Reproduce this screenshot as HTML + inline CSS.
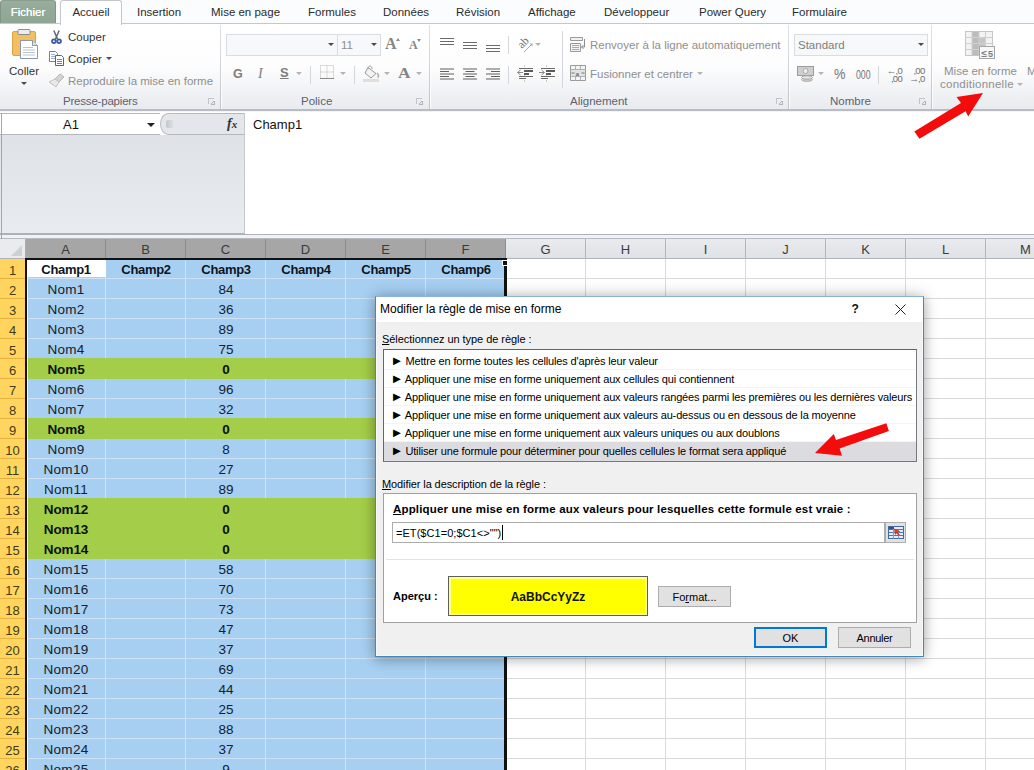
<!DOCTYPE html>
<html lang="fr"><head><meta charset="utf-8"><title>Excel</title>
<style>
*{box-sizing:border-box;margin:0;padding:0}
html,body{width:1034px;height:770px;overflow:hidden;background:#fff}
body{position:relative;font-family:"Liberation Sans",sans-serif;font-size:12px;color:#1e1e1e}
.abs{position:absolute}
/* ---------- tabs ---------- */
.tabs{position:absolute;left:0;top:0;width:1034px;height:24px;background:#fbfcfd;border-bottom:1px solid #c4c8cd}
.tabs span{position:absolute;top:0;height:24px;line-height:24px;font-size:11.5px;color:#2b2b2b;white-space:nowrap}
.tabs .fich{left:0;width:56px;height:23px;line-height:23px;background:linear-gradient(#98ad9c,#8fa694);color:#fff;text-shadow:0 0 .6px #fff;text-align:center;border-radius:3px 3px 0 0;border:1px solid #7f9686;border-top-color:#8ba091;border-bottom:none}
.tabs .acc{left:60px;width:62px;height:25px;line-height:22px;background:#fff;border:1px solid #c4c8cd;border-bottom:none;border-radius:3px 3px 0 0;text-align:center;z-index:2}
/* ---------- ribbon ---------- */
.ribbon{position:absolute;left:0;top:24px;width:1034px;height:87px;background:linear-gradient(#ffffff 0%,#fdfdfe 50%,#f2f4f6 75%,#e8ebef 100%);border-bottom:2px solid #b9bdc3}
.ribbon .sep{position:absolute;top:1px;width:1px;height:84px;background:linear-gradient(#dfe2e6,#bfc3c9);box-shadow:1px 0 0 rgba(255,255,255,.8)}
.ribbon .t{position:absolute;white-space:nowrap;font-size:11.5px;color:#333;line-height:14px}
.ribbon .g{color:#8f8f8f}
.ribbon .lbl{position:absolute;top:70px;font-size:11.5px;color:#5a6270;line-height:14px;white-space:nowrap}
.ribbon .box{position:absolute;top:10px;height:22px;border:1px solid #d9dce1;background:#f7f8fa}
.under{position:absolute;left:0;top:111px;width:1034px;height:3px;background:#f3f4f6}
/* ---------- formula bar ---------- */
.fbar{position:absolute;left:0;top:112px;width:1034px;height:127px;background:#fff}
.namebox{position:absolute;left:0;top:1px;width:161px;height:22px;background:#fff;border:1px solid #b4b8be;border-left:none;border-right:none}
.namebox span{position:absolute;left:63px;top:3px;font-size:13px;color:#111;line-height:15px}
.fgrey{position:absolute;left:0;top:23px;width:245px;height:99px;background:linear-gradient(#dfe3e8,#e8ebef);border-bottom:1px solid #aeb2b8;border-right:1px solid #c5c9ce}
.fmid{position:absolute;left:160px;top:1px;width:85px;height:22px;background:#e3e6ea;border-top:1px solid #b4b8be;border-bottom:1px solid #b4b8be;border-right:1px solid #c5c9ce}
.ftext{position:absolute;left:253px;top:5px;font-size:13px;color:#111;line-height:15px}
.fbot{position:absolute;left:0;top:122px;width:1034px;height:5px;background:#f1f2f4;border-top:1px solid #aeb2b8}
/* ---------- headers ---------- */
.colhdr{position:absolute;left:0;top:238px;width:1034px;height:21px;background:#e4e7eb;border-top:1px solid #b7bbc1;border-bottom:1px solid #b1b5ba}
.corner{position:absolute;left:0;top:0;width:26px;height:19px;background:#e9ebee;border-right:1px solid #a9adb3}
.corner i{position:absolute;right:3px;bottom:2px;border-left:11px solid transparent;border-bottom:11px solid #cdd0d4;width:0;height:0}
.ch{position:absolute;top:0;width:80px;height:19px;line-height:21px;text-align:center;font-size:13px;color:#3c3c3c;border-right:1px solid #b1b5ba;background:linear-gradient(#e9ebee,#dfe2e6)}
.ch.sel{background:#a6a6a6;color:#3a3a3a;border-right-color:#8c8c8c}
/* ---------- grid ---------- */
.grid{position:absolute;left:0;top:259px;width:1034px;height:520px;
 background-image:linear-gradient(to right,#d8dadd 1px,transparent 1px),linear-gradient(#d8dadd 1px,transparent 1px);
 background-size:80px 20px,80px 20px;background-position:25px 0,0 -1px;background-color:#fff}
.row{position:absolute;left:0;width:506px;height:20px;background:#a6cff1;
 background-image:linear-gradient(to right,#cde2f6 1px,transparent 1px);background-size:80px 20px;background-position:25px 0;border-bottom:1px solid #cde2f6}
.row.gr{background:#a4ce49;border-bottom-color:#a4ce49;background-image:none}
.row.gr:before{content:'';position:absolute;left:27px;right:0;top:-1px;height:1px;background:#a4ce49}
.row span{position:absolute;bottom:1px;width:80px;height:19px;line-height:23.5px;text-align:center;font-size:13.5px;color:#14202e;white-space:nowrap;letter-spacing:0}
.row span:nth-of-type(1){letter-spacing:.3px}
.row.hd span,.row.gr span{font-weight:bold;color:#0c1622;font-size:13px;letter-spacing:-0.33px}
.row.gr span{font-size:13.5px;letter-spacing:-.1px;color:#0a1208}
.row .act{background:#fff}
.rn{position:absolute;left:0;bottom:-1px;width:26px;height:20px;line-height:24px;text-align:center;font-size:13px;font-weight:normal;color:#453a18;background:#ffd55f;border-bottom:1px solid #e6b23e;border-right:1px solid #d9a633}
.selr{position:absolute;left:504px;top:6px;width:3px;height:520px;background:#111}
.selb{position:absolute;left:25px;top:-1px;width:482px;height:2px;background:#111}
.sell{position:absolute;left:25.400px;top:-1px;width:1.600px;height:520px;background:#15110a;border-right:0}
.sell:after{content:'';position:absolute;left:1.600px;top:3px;width:1px;height:520px;background:rgba(255,255,255,.8)}
.selh{position:absolute;left:502px;top:1px;width:6px;height:6px;background:#111;border:1px solid #fff}
/* small icons */
i.dd{position:absolute;width:0;height:0;border-left:3px solid transparent;border-right:3px solid transparent;border-top:3px solid #4a4a4a}
i.dd.l{border-top-color:#b3b3b3;border-left-width:3px;border-right-width:3px;border-top-width:3px}
i.dd.s{border-top-color:#8a8a8a;border-left-width:2.500px;border-right-width:2.500px;border-top-width:3px}
i.dd.k{border-top-color:#222;border-left-width:4px;border-right-width:4px;border-top-width:4px}
i.up{position:absolute;width:0;height:0;border-left:2.500px solid transparent;border-right:2.500px solid transparent;border-bottom:3px solid #8a8a8a}
i.ln{position:absolute;top:74px;width:6px;height:6px;border-left:1px solid #c0c4ca;border-top:1px solid #c0c4ca}
i.ln:after{content:"";position:absolute;left:2px;top:2px;width:3px;height:3px;border-right:1px solid #b0b4ba;border-bottom:1px solid #b0b4ba;background:linear-gradient(135deg,transparent 45%,#b0b4ba 45%,#b0b4ba 60%,transparent 60%)}
.vs{position:absolute;width:1px;height:18px;background:#d3d6da}
.dec{width:16px;height:20px;color:#6f6f6f;text-align:right}
.dec b{display:block;font:normal 9.500px/7.500px "Liberation Sans",sans-serif;letter-spacing:-0.700px;white-space:nowrap}
.knob{position:absolute;left:0;top:-1px;width:9px;height:22px;border:1px solid #b9bdc3;border-right:none;border-radius:8px 0 0 8px / 11px 0 0 11px;background:#e3e6ea}
.knob:after{content:"";position:absolute;left:5px;top:6px;width:7px;height:8px;border-radius:2px 0 0 2px;background:linear-gradient(to right,#c3c6ca,#dde0e3)}
.fmid:before{content:"";position:absolute;left:0;top:-1px;width:9px;height:22px;background:#fff}
.fx{position:absolute;left:67px;top:0;font:italic bold 14px/20px "Liberation Serif",serif;color:#333}
.fx small{font-size:11px}
/* ---------- dialog ---------- */
.dlg{position:absolute;left:375px;top:296px;width:549px;height:361px;background:#f0f0f0;border:1px solid #4687b8;border-top-color:#8db3d3;box-shadow:0 0 14px rgba(0,0,0,.28),0 4px 10px rgba(0,0,0,.12),inset 0 0 0 1px rgba(255,255,255,.6);z-index:20;font-size:11px;color:#000}
.ttl{position:absolute;left:0;top:0;width:547px;height:25px;background:#fff}
.ttl span{position:absolute;left:4px;top:5px;font-size:12px;line-height:15px;color:#000;white-space:nowrap}
.ttl .q{position:absolute;left:475.500px;top:5px;font:bold 12px/15px "Liberation Sans",sans-serif;color:#111}
.ttl .x{position:absolute;left:519px;top:7px}
.dl{position:absolute;font-size:11px;line-height:14px;white-space:nowrap;color:#000}
.lb{position:absolute;left:7px;top:52px;width:534px;height:113px;padding-top:2px;background:#fff;border:1px solid #767a80;border-top-color:#5f6368;border-left-color:#63676c}
.lb p{height:18.050px;line-height:18px;padding-left:8px;white-space:nowrap;font-size:11px;letter-spacing:-0.15px;border-bottom:1px solid #f4f4f4;color:#000;word-spacing:0}
.lb p.on{background:#dcdce0;border-bottom:none;height:19px}
.pn{position:absolute;left:7px;top:196px;width:534px;height:130px;background:#fff;border:1px solid #a0a0a0}
.bt{position:absolute;font-weight:bold;font-size:11px;line-height:14px;white-space:nowrap}
.inp{position:absolute;left:8px;top:28px;width:493px;height:21px;border:1px solid #adadad;background:#fff}
.inp span{position:absolute;left:3px;top:3px;font-size:11px;line-height:14px;letter-spacing:.05px}
.car{position:absolute;left:109px;top:2px;width:1px;height:15px;background:#000}
.ref{position:absolute;left:500.5px;top:28px;width:21px;height:21px;border:1px solid #adadad;background:#e1e1e1}
.ref svg{position:absolute;left:2px;top:3px}
.hr{position:absolute;left:2px;top:65px;width:528px;height:1px;background:#e3e3e3}
.pv{position:absolute;left:64px;top:82px;width:200px;height:40px;background:#ffff00;border:1px solid #5e5e5e;box-shadow:inset 0 0 0 2px #ffff8c;text-align:center;font:bold 12px/40px "Liberation Sans",sans-serif;color:#111}
.btn{position:absolute;height:21px;border:1px solid #adadad;background:#e1e1e1;text-align:center;font-size:11px;line-height:20.5px;color:#000}
.btn.ok{border:2px solid #0078d7;line-height:18.5px}
.bt.w{font-size:11.5px;letter-spacing:.16px}
.ledge{position:absolute;left:1px;top:113px;width:1px;height:126px;background:#a4a8ae;z-index:3}
.lb p i{font-style:normal;font-size:13px;line-height:10px;margin-left:-1.5px;letter-spacing:0;display:inline-block;width:12px;vertical-align:0}
</style></head><body>
<div class="tabs">
<span class="fich">Fichier</span>
<span class="acc">Accueil</span>
<span style="left:137px">Insertion</span>
<span style="left:211px">Mise en page</span>
<span style="left:308px">Formules</span>
<span style="left:383px">Données</span>
<span style="left:456px">Révision</span>
<span style="left:528px">Affichage</span>
<span style="left:604px">Développeur</span>
<span style="left:699px">Power Query</span>
<span style="left:792px">Formulaire</span>
</div>
<div class="ribbon">
<!-- Presse-papiers -->
<svg class="abs" style="left:10px;top:4px" width="30" height="32" viewBox="0 0 30 32">
 <rect x="2.5" y="3.5" width="23" height="24" rx="1.5" fill="#f2c063" stroke="#d9a544"/>
 <rect x="8" y="1.5" width="12" height="5" rx="1" fill="#ededed" stroke="#8c8c8c"/>
 <path d="M10.5 12.5h12l5 5v13h-17z" fill="#fff" stroke="#8b98ab"/>
 <path d="M22.5 12.5v5h5" fill="#dfe5ee" stroke="#8b98ab"/>
 <path d="M13 19.5h10M13 22h12M13 24.5h12M13 27h12" stroke="#b9c2cf" stroke-width="1"/>
</svg>
<span class="t" style="left:9px;top:40px">Coller</span>
<i class="dd" style="left:21px;top:58px"></i>
<svg class="abs" style="left:51px;top:6px" width="11" height="15" viewBox="0 0 11 15">
 <path d="M2.800 0.500l3.700 8.500M8.200 0.500L4.500 9" stroke="#5f6873" stroke-width="1.500" fill="none"/>
 <circle cx="2.900" cy="11.300" r="1.900" fill="#dfe6f5" stroke="#3a5ca8" stroke-width="1.700"/>
 <circle cx="8.100" cy="11.300" r="1.900" fill="#dfe6f5" stroke="#3a5ca8" stroke-width="1.700"/>
</svg>
<span class="t" style="left:68px;top:6px">Couper</span>
<svg class="abs" style="left:48px;top:27px" width="17" height="15" viewBox="0 0 17 15">
 <path d="M1.500 0.500h6l2 2v8h-8z" fill="#fff" stroke="#6e85a8"/>
 <path d="M3 3.500h4M3 5.500h5M3 7.500h5" stroke="#9fb3d1"/>
 <path d="M7.500 4.500h6l2 2v8h-8z" fill="#fff" stroke="#3f66a6"/>
 <path d="M9 8.500h5M9 10.500h5M9 12.500h5" stroke="#5f86c6"/>
</svg>
<span class="t" style="left:68px;top:28px">Copier</span>
<i class="dd" style="left:106px;top:33px"></i>
<svg class="abs" style="left:48px;top:49px" width="18" height="15" viewBox="0 0 18 15">
 <path d="M12 1l4 3-5 5-4-3z" fill="#d4d4d4" stroke="#b5b5b5"/>
 <path d="M7 6l4 3-3 5-7-5z" fill="#e8e8e8" stroke="#c2c2c2"/>
</svg>
<span class="t g" style="left:68px;top:50px">Reproduire la mise en forme</span>
<span class="lbl" style="left:63px;letter-spacing:-.2px">Presse-papiers</span>
<i class="ln" style="left:208px"></i>
<div class="sep" style="left:220px"></div>
<!-- Police -->
<div class="box" style="left:226px;width:112px"></div>
<div class="box" style="left:337px;width:44px"></div>
<i class="dd" style="left:328px;top:19px"></i>
<span class="t g" style="left:341px;top:14px">11</span>
<i class="dd" style="left:371px;top:19px"></i>
<span class="abs" style="left:385px;top:8px;font:bold 16px/24px 'Liberation Serif',serif;color:#858585">A</span><i class="up" style="left:396px;top:14px"></i>
<span class="abs" style="left:409px;top:11px;font:bold 12px/20px 'Liberation Serif',serif;color:#858585">A</span><i class="dd s" style="left:417px;top:15px"></i>
<span class="abs" style="left:233px;top:42px;font:bold 12.5px/16px 'Liberation Sans',sans-serif;color:#7d7d7d">G</span>
<span class="abs" style="left:258px;top:42px;font:italic 14px/16px 'Liberation Serif',serif;color:#7d7d7d">I</span>
<span class="abs" style="left:280px;top:41px;font:bold 13px/16px 'Liberation Sans',sans-serif;color:#7d7d7d;text-decoration:underline">S</span>
<i class="dd l" style="left:296px;top:48px"></i>
<div class="vs" style="left:310px;top:42px"></div>
<svg class="abs" style="left:320px;top:41px" width="15" height="15" viewBox="0 0 15 15"><path d="M0.500 0.500h13v13h-13zM7 0.500v13M0.500 7h13" fill="none" stroke="#b9b9b9" stroke-dasharray="1 1"/><path d="M0 13.500h14" stroke="#8a8a8a"/></svg>
<i class="dd l" style="left:340px;top:48px"></i>
<div class="vs" style="left:354px;top:42px"></div>
<svg class="abs" style="left:362px;top:39px" width="20" height="20" viewBox="0 0 20 20"><path d="M6 4.500l8 6-5 4.500-6-5z" fill="#f3f3f3" stroke="#9a9a9a"/><path d="M6 6c0-4 4-4 4 0" fill="none" stroke="#9a9a9a"/><path d="M15 10c2 2 2 4 0.500 4.500" fill="none" stroke="#aaa" stroke-width="1.500"/><rect x="1" y="16" width="16" height="3" fill="#dedede"/></svg>
<i class="dd l" style="left:384px;top:48px"></i>
<span class="abs" style="left:398px;top:38px;font:bold 15px/22px 'Liberation Serif',serif;color:#858585;transform:scaleX(1.15);transform-origin:0 0">A</span>
<i class="dd l" style="left:416px;top:48px"></i>
<span class="lbl" style="left:301px">Police</span>
<i class="ln" style="left:416px"></i>
<div class="sep" style="left:429px"></div>
<!-- Alignement -->
<svg class="abs" style="left:440px;top:13px" width="62" height="16" viewBox="0 0 62 16"><path d="M0 1.500h14M0 4.500h14M0 7.500h14M23 5.500h14M23 8.500h14M23 11.500h14M46 8.500h14M46 11.500h14M46 14.500h14" stroke="#6a6a6a"/></svg>
<svg class="abs" style="left:440px;top:44px" width="62" height="13" viewBox="0 0 62 13"><path d="M0 1h14M0 3.5h9M0 6h14M0 8.5h9M0 11h14M23 1h14M25.5 3.5h9M23 6h14M25.5 8.5h9M23 11h14M46 1h14M51 3.5h9M46 6h14M51 8.5h9M46 11h14" stroke="#5f5f5f" stroke-width="1.100"/></svg>
<div class="vs" style="left:508px;top:12px"></div>
<div class="vs" style="left:508px;top:42px"></div>
<svg class="abs" style="left:516px;top:12px" width="20" height="18" viewBox="0 0 20 18"><text x="0" y="0" font-family="Liberation Serif,serif" font-size="11.500" fill="#6f6f6f" transform="translate(6 13) rotate(-45)">ab</text><path d="M8 16l8-8" stroke="#a8a8a8" fill="none" stroke-width="1"/><path d="M13.500 7.500h3v3z" fill="#a8a8a8"/></svg>
<i class="dd l" style="left:535px;top:19px"></i>
<svg class="abs" style="left:517px;top:41px" width="40" height="17" viewBox="0 0 40 17"><path d="M7.5 0.500v16" stroke="#9a9a9a" stroke-dasharray="1 1.500"/><path d="M2 3.500h14M2 11.500h14M2 13.500h7" stroke="#6a6a6a"/><path d="M7 6h9M7 9h5" stroke="#5a5a5a" stroke-width="1.800"/><path d="M0.5 7.500h5.500M3.5 5l-3 2.500 3 2.500" stroke="#8a8a8a" fill="none"/><path d="M29.5 0.500v16" stroke="#9a9a9a" stroke-dasharray="1 1.500"/><path d="M24 3.500h14M24 11.500h14M24 13.500h7" stroke="#6a6a6a"/><path d="M29 6h9M29 9h5" stroke="#5a5a5a" stroke-width="1.800"/><path d="M22 7.500h5M24.5 5l3 2.500-3 2.500" stroke="#8a8a8a" fill="none"/></svg>
<div class="vs" style="left:562px;top:7px;height:57px"></div>
<svg class="abs" style="left:570px;top:12px" width="17" height="17" viewBox="0 0 17 17"><path d="M0.500 1.500h12v3h-12zM0.500 7.500h10v8h-10z" fill="#f1f1f1" stroke="#9a9a9a"/><path d="M2 9.500h7M2 11.500h7M2 13.500h7" stroke="#aaa"/><path d="M14.500 3v8h-3M11.500 11l2-2M11.500 11l2 2" stroke="#8c8c8c" fill="none"/></svg>
<span class="t g" style="left:590px;top:14px">Renvoyer à la ligne automatiquement</span>
<svg class="abs" style="left:570px;top:41px" width="17" height="17" viewBox="0 0 17 17"><path d="M0.500 0.500h15v15h-15z" fill="#f4f4f4" stroke="#9a9a9a"/><path d="M0.500 4.500h15M0.500 11.500h15M5.500 0.500v4M10.500 0.500v4M5.500 11.500v4M10.500 11.500v4" stroke="#b0b0b0"/><rect x="1" y="5" width="14" height="6" fill="#e2e2e2"/><text x="5.500" y="10.500" font-family="Liberation Serif,serif" font-weight="bold" font-size="7" fill="#666">a</text><path d="M1.500 8h3M11.500 8h3" stroke="#777"/></svg>
<span class="t g" style="left:590px;top:43px">Fusionner et centrer</span>
<i class="dd l" style="left:697px;top:48px"></i>
<span class="lbl" style="left:570px">Alignement</span>
<i class="ln" style="left:776px"></i>
<div class="sep" style="left:788px"></div>
<!-- Nombre -->
<div class="box" style="left:794px;width:134px"></div>
<span class="t g" style="left:798px;top:14px;color:#7e7e7e">Standard</span>
<i class="dd" style="left:918px;top:19px"></i>
<svg class="abs" style="left:797px;top:42px" width="19" height="18" viewBox="0 0 19 18"><rect x="0.500" y="0.500" width="16" height="9" fill="#cfcfcf" stroke="#9c9c9c"/><circle cx="8.500" cy="5" r="2.500" fill="#ededed" stroke="#aaa"/><ellipse cx="10" cy="13.500" rx="5.500" ry="1.800" fill="#d8d8d8" stroke="#a5a5a5"/><ellipse cx="10" cy="11.500" rx="5.500" ry="1.800" fill="#e4e4e4" stroke="#a5a5a5"/></svg>
<i class="dd l" style="left:818px;top:48px"></i>
<span class="abs" style="left:834px;top:42px;font:14px/16px 'Liberation Sans',sans-serif;color:#747474;transform:scaleX(.92);transform-origin:0 0">%</span>
<span class="abs" style="left:856px;top:42.500px;font:12.500px/16px 'Liberation Sans',sans-serif;color:#747474;transform:scaleX(.7);transform-origin:0 0">000</span>
<div class="vs" style="left:878px;top:42px"></div>
<span class="abs dec" style="left:886px;top:43px"><b>←,0</b><b>,00</b></span>
<span class="abs dec" style="left:908.500px;top:43px"><b>,00</b><b>→,0</b></span>
<span class="lbl" style="left:830px">Nombre</span>
<i class="ln" style="left:919px"></i>
<div class="sep" style="left:931px"></div>
<!-- Styles -->
<svg class="abs" style="left:964px;top:6px" width="32" height="32" viewBox="0 0 32 32"><rect x="1.500" y="1.500" width="27" height="24" fill="#f3f3f3" stroke="#c6c6c6"/><rect x="8" y="2" width="7" height="23" fill="#bcbcbc"/><rect x="15" y="8" width="6" height="12" fill="#c6c6c6"/><path d="M1.500 7.500h27M1.500 13.500h27M1.500 19.500h27M8 1.500v24M15 1.500v24M21.500 1.500v24" stroke="#cfcfcf"/><rect x="15.500" y="16.500" width="15" height="12" fill="#f7f7f7" stroke="#a6a6a6"/><text x="17.500" y="26.500" font-family="Liberation Sans,sans-serif" font-size="10" font-weight="bold" fill="#808080">≤</text><text x="24" y="26.500" font-family="Liberation Sans,sans-serif" font-size="9" font-weight="bold" fill="#808080">5</text></svg>
<span class="t g" style="left:944px;top:40px">Mise en forme</span>
<span class="t g" style="left:940px;top:53px;letter-spacing:.25px">conditionnelle</span>
<i class="dd l" style="left:1017px;top:59px"></i>
<span class="t g" style="left:1027px;top:40px">M</span>
</div>
<div class="under"></div><div class="ledge"></div>
<!-- formula bar -->
<div class="fbar">
 <div class="namebox"><span>A1</span><i class="dd k" style="left:147px;top:9px"></i></div>
 <div class="fmid"><i class="knob"></i><span class="fx">f<small>x</small></span></div>
 <div class="fgrey"></div>
 <div class="ftext">Champ1</div>
 <div class="fbot"></div>
</div>
<svg class="abs" style="left:0;top:0;z-index:30;pointer-events:none" width="1034" height="770" viewBox="0 0 1034 770">
 <polygon points="983,93 956.5,97 961,103 914.3,131.400 919.500,138.800 965.600,111.300 968.200,116.500" fill="#f40b0b"/>
 <polygon points="815,453 833.800,434 836,440 886.300,423.300 888.900,431.100 839.600,448.600 842,455.700" fill="#f40b0b"/>
</svg>
<div class="colhdr"><div class="corner"><i></i></div><div class="ch sel" style="left:26px">A</div><div class="ch sel" style="left:106px">B</div><div class="ch sel" style="left:186px">C</div><div class="ch sel" style="left:266px">D</div><div class="ch sel" style="left:346px">E</div><div class="ch sel" style="left:426px">F</div><div class="ch" style="left:506px">G</div><div class="ch" style="left:586px">H</div><div class="ch" style="left:666px">I</div><div class="ch" style="left:746px">J</div><div class="ch" style="left:826px">K</div><div class="ch" style="left:906px">L</div><div class="ch" style="left:986px">M</div></div>
<div class="grid"><div class="row hd" style="top:0px"><b class="rn">1</b><span class="act" style="left:26px">Champ1</span><span style="left:106px">Champ2</span><span style="left:186px">Champ3</span><span style="left:266px">Champ4</span><span style="left:346px">Champ5</span><span style="left:426px">Champ6</span></div>
<div class="row" style="top:20px"><b class="rn">2</b><span style="left:26px">Nom1</span><span style="left:186px">84</span></div>
<div class="row" style="top:40px"><b class="rn">3</b><span style="left:26px">Nom2</span><span style="left:186px">36</span></div>
<div class="row" style="top:60px"><b class="rn">4</b><span style="left:26px">Nom3</span><span style="left:186px">89</span></div>
<div class="row" style="top:80px"><b class="rn">5</b><span style="left:26px">Nom4</span><span style="left:186px">75</span></div>
<div class="row gr" style="top:100px"><b class="rn">6</b><span style="left:26px">Nom5</span><span style="left:186px">0</span></div>
<div class="row" style="top:120px"><b class="rn">7</b><span style="left:26px">Nom6</span><span style="left:186px">96</span></div>
<div class="row" style="top:140px"><b class="rn">8</b><span style="left:26px">Nom7</span><span style="left:186px">32</span></div>
<div class="row gr" style="top:160px"><b class="rn">9</b><span style="left:26px">Nom8</span><span style="left:186px">0</span></div>
<div class="row" style="top:180px"><b class="rn">10</b><span style="left:26px">Nom9</span><span style="left:186px">8</span></div>
<div class="row" style="top:200px"><b class="rn">11</b><span style="left:26px">Nom10</span><span style="left:186px">27</span></div>
<div class="row" style="top:220px"><b class="rn">12</b><span style="left:26px">Nom11</span><span style="left:186px">89</span></div>
<div class="row gr" style="top:240px"><b class="rn">13</b><span style="left:26px">Nom12</span><span style="left:186px">0</span></div>
<div class="row gr" style="top:260px"><b class="rn">14</b><span style="left:26px">Nom13</span><span style="left:186px">0</span></div>
<div class="row gr" style="top:280px"><b class="rn">15</b><span style="left:26px">Nom14</span><span style="left:186px">0</span></div>
<div class="row" style="top:300px"><b class="rn">16</b><span style="left:26px">Nom15</span><span style="left:186px">58</span></div>
<div class="row" style="top:320px"><b class="rn">17</b><span style="left:26px">Nom16</span><span style="left:186px">70</span></div>
<div class="row" style="top:340px"><b class="rn">18</b><span style="left:26px">Nom17</span><span style="left:186px">73</span></div>
<div class="row" style="top:360px"><b class="rn">19</b><span style="left:26px">Nom18</span><span style="left:186px">47</span></div>
<div class="row" style="top:380px"><b class="rn">20</b><span style="left:26px">Nom19</span><span style="left:186px">37</span></div>
<div class="row" style="top:400px"><b class="rn">21</b><span style="left:26px">Nom20</span><span style="left:186px">69</span></div>
<div class="row" style="top:420px"><b class="rn">22</b><span style="left:26px">Nom21</span><span style="left:186px">44</span></div>
<div class="row" style="top:440px"><b class="rn">23</b><span style="left:26px">Nom22</span><span style="left:186px">25</span></div>
<div class="row" style="top:460px"><b class="rn">24</b><span style="left:26px">Nom23</span><span style="left:186px">88</span></div>
<div class="row" style="top:480px"><b class="rn">25</b><span style="left:26px">Nom24</span><span style="left:186px">37</span></div>
<div class="row" style="top:500px"><b class="rn">26</b><span style="left:26px">Nom25</span><span style="left:186px">9</span></div>
<div class="selb"></div><div class="sell"></div><div class="selr"></div><div class="selh"></div></div>
<div class="dlg">
 <div class="ttl"><span>Modifier la règle de mise en forme</span>
  <b class="q">?</b>
  <svg class="x" width="11" height="11" viewBox="0 0 11 11"><path d="M0.500 0.500l10 10M10.500 0.500l-10 10" stroke="#222" stroke-width="1"/></svg>
 </div>
 <div class="dl" style="left:6px;top:35px;letter-spacing:-.05px"><u>S</u>électionnez un type de règle :</div>
 <div class="lb">
  <p><i>►</i> Mettre en forme toutes les cellules d'après leur valeur</p>
  <p><i>►</i> Appliquer une mise en forme uniquement aux cellules qui contiennent</p>
  <p><i>►</i> Appliquer une mise en forme uniquement aux valeurs rangées parmi les premières ou les dernières valeurs</p>
  <p><i>►</i> Appliquer une mise en forme uniquement aux valeurs au-dessus ou en dessous de la moyenne</p>
  <p><i>►</i> Appliquer une mise en forme uniquement aux valeurs uniques ou aux doublons</p>
  <p class="on"><i>►</i> Utiliser une formule pour déterminer pour quelles cellules le format sera appliqué</p>
 </div>
 <div class="dl" style="left:6px;top:180px;letter-spacing:-.1px"><u>M</u>odifier la description de la règle :</div>
 <div class="pn">
  <div class="bt w" style="left:9px;top:7.500px"><u>A</u>ppliquer une mise en forme aux valeurs pour lesquelles cette formule est vraie :</div>
  <div class="inp"><span>=ET($C1=0;$C1&lt;&gt;"")</span><i class="car"></i></div>
  <div class="ref"><svg width="16" height="13" viewBox="0 0 16 13"><rect x="0.500" y="0.500" width="15" height="12" fill="#e4eefb" stroke="#44679f"/><path d="M0.500 3.500h15M0.500 6.500h15M0.500 9.500h15" stroke="#4f74b3"/><path d="M5.500 0.500v12M10.500 3.500v9" stroke="#7f9fd0"/><rect x="1" y="1" width="5" height="2" fill="#2f4f8a"/><path d="M6 2.500l6.500 3-2.500.800 2 2.700-1.300 1-2-2.700-1.700 1.700z" fill="#d9391f"/></svg></div>
  <div class="hr"></div>
  <div class="bt" style="left:9px;top:95px">Aperçu :</div>
  <div class="pv">AaBbCcYyZz</div>
  <div class="btn" style="left:274px;top:92px;width:73px">Fo<u>r</u>mat...</div>
 </div>
 <div class="btn ok" style="left:378px;top:330px;width:73px">OK</div>
 <div class="btn" style="left:462px;top:330px;width:73px;letter-spacing:-.3px">Annuler</div>
</div>
</body></html>
